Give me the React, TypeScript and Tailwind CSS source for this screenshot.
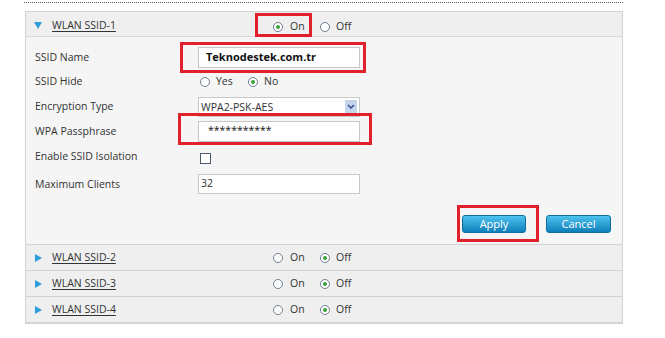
function Radio({ checked }: { checked?: boolean }) {
  return (
    <span className="inline-flex h-[10px] w-[10px] shrink-0 items-center justify-center rounded-full border border-[#6f7f8f] bg-white">
      {checked && <span className="h-[4px] w-[4px] rounded-full bg-[#3a9c3a]" />}
    </span>
  );
}

function OnOff({ on }: { on: boolean }) {
  return (
    <div className="flex items-center">
      <Radio checked={on} />
      <span className="ml-[7px] w-[30px]">On</span>
      <Radio checked={!on} />
      <span className="ml-[6px]">Off</span>
    </div>
  );
}

function FieldRow({ label, h, children }: { label: string; h: string; children?: React.ReactNode }) {
  return (
    <div className={`flex items-center ${h}`}>
      <div className="w-[163px] pt-[1px]">{label}</div>
      {children}
    </div>
  );
}

function CollapsedRow({ name }: { name: string }) {
  return (
    <div className="flex h-[26px] items-center border-t border-[#d3d3d3] bg-[#efefef] pt-[1px]">
      <div className="flex w-[247px] items-center pl-[9px]">
        <svg width="7" height="8" viewBox="0 0 7 8">
          <path d="M0 0 L7 4 L0 8 Z" fill="#2f9fdc" />
        </svg>
        <span className="ml-[10px] underline underline-offset-2">{name}</span>
      </div>
      <OnOff on={false} />
    </div>
  );
}

export default function App() {
  return (
    <div
      className="relative h-[338px] w-[665px] overflow-hidden bg-white pl-[24px] pt-[2px] text-[10.5px] text-[#333]"
      style={{ fontFamily: '"Open Sans", "Noto Sans", sans-serif' }}
    >
      <div className="w-[599px] border-t border-dotted border-[#555]" />

      <div className="ml-[1px] mt-[8px] w-[598px] border-x border-t border-b-2 border-[#d3d3d3]">
        {/* header */}
        <div className="flex h-[25px] items-center border-b border-[#d8d8d8] bg-[#efefef] pt-[3px]">
          <div className="flex w-[247px] items-center pl-[8px]">
            <svg width="8" height="7" viewBox="0 0 8 7">
              <path d="M0 0 L8 0 L4 7 Z" fill="#2f9fdc" />
            </svg>
            <span className="ml-[10px] underline underline-offset-2">WLAN SSID-1</span>
          </div>
          <div className="pt-[2px]">
            <OnOff on />
          </div>
        </div>

        {/* body */}
        <div className="bg-[#f5f5f5] pl-[9px] pr-[10px] pb-[11px] pt-[9px]">
          <FieldRow label="SSID Name" h="h-[23px]">
            <div className="flex h-[21px] w-[162px] items-center border border-[#c8c8c8] bg-white pl-[7px] text-[11px] font-bold text-[#111]">
              Teknodestek.com.tr
            </div>
          </FieldRow>
          <FieldRow label="SSID Hide" h="h-[25px]">
            <div className="flex items-center pl-[2px]">
              <Radio />
              <span className="ml-[6px] w-[32px]">Yes</span>
              <Radio checked />
              <span className="ml-[6px]">No</span>
            </div>
          </FieldRow>
          <FieldRow label="Encryption Type" h="h-[25px]">
            <div className="flex h-[20px] w-[162px] items-center justify-between border border-[#c8c8c8] bg-white pl-[2px] pr-[2px]">
              <span className="pt-[2px]">WPA2-PSK-AES</span>
              <span className="flex h-[14px] w-[12px] items-center justify-center bg-[#c6d5ee]">
                <svg width="8" height="5" viewBox="0 0 8 5">
                  <path d="M1 1 L4 4 L7 1" stroke="#2c4f8a" strokeWidth="1.5" fill="none" />
                </svg>
              </span>
            </div>
          </FieldRow>
          <FieldRow label="WPA Passphrase" h="h-[24px]">
            <div className="flex h-[21px] w-[162px] items-center border border-[#c8c8c8] bg-white pl-[9px] text-[#111]">
              ***********
            </div>
          </FieldRow>
          <FieldRow label="Enable SSID Isolation" h="h-[27px]">
            <span className="ml-[2px] mt-[4px] h-[11px] w-[11px] border border-[#4c5c6c] bg-white" />
          </FieldRow>
          <FieldRow label="Maximum Clients" h="h-[28px]">
            <div className="flex h-[20px] w-[162px] items-center border border-[#c8c8c8] bg-white pl-[2px]">
              32
            </div>
          </FieldRow>

          <div className="mt-[17px] flex justify-end gap-[20px] pr-[1px]">
            <button className="h-[18px] w-[64px] rounded-[3px] border border-[#0d6f9f] bg-gradient-to-b from-[#4cc3ef] to-[#0a7fba] text-[11px] text-white">
              Apply
            </button>
            <button className="h-[18px] w-[65px] rounded-[3px] border border-[#0d6f9f] bg-gradient-to-b from-[#4cc3ef] to-[#0a7fba] text-[11px] text-white">
              Cancel
            </button>
          </div>
        </div>

        <CollapsedRow name="WLAN SSID-2" />
        <CollapsedRow name="WLAN SSID-3" />
        <CollapsedRow name="WLAN SSID-4" />
      </div>

      {/* red highlight boxes */}
      <div className="absolute left-[255px] top-[13px] h-[24px] w-[57px] border-[3px] border-[#e0202a]" />
      <div className="absolute left-[180px] top-[42px] h-[31px] w-[186px] border-[3px] border-[#e0202a]" />
      <div className="absolute left-[178px] top-[113px] h-[32px] w-[194px] border-[3px] border-[#e0202a]" />
      <div className="absolute left-[457px] top-[205px] h-[37px] w-[82px] border-[3px] border-[#e0202a]" />
    </div>
  );
}
